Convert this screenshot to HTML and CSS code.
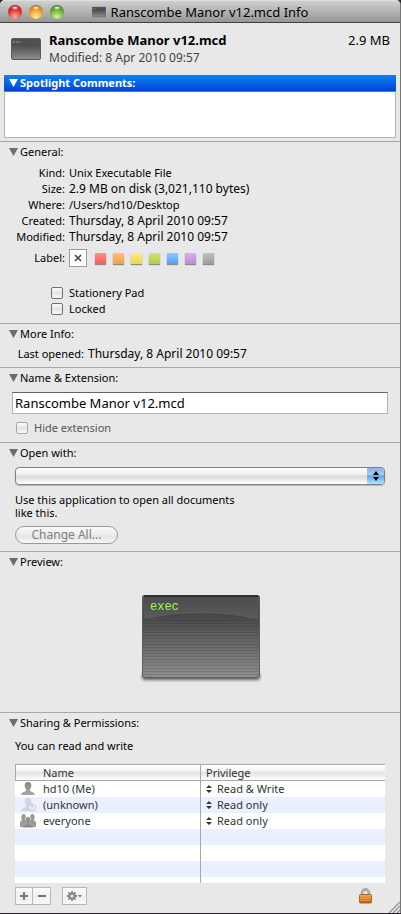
FILE: index.html
```html
<!DOCTYPE html>
<html lang="en">
<head>
    <meta charset="UTF-8">
    <meta name="viewport" content="width=device-width, initial-scale=1.0">
    <title>Ranscombe Manor v12.mcd Info</title>
    <link rel="stylesheet" href="styles.css">
</head>
<body>
    <!-- shared icons -->
    <svg class="defs" width="0" height="0" aria-hidden="true">
        <defs>
            <linearGradient id="execBody" x1="0" y1="0" x2="0" y2="1">
                <stop offset="0" stop-color="#565656"/>
                <stop offset="0.27" stop-color="#4a4a4a"/>
                <stop offset="1" stop-color="#8e8e8e"/>
            </linearGradient>
            <linearGradient id="execTop" x1="0" y1="0" x2="0" y2="1">
                <stop offset="0" stop-color="#4c4c4c"/>
                <stop offset="1" stop-color="#5c5c5c"/>
            </linearGradient>
            <pattern id="scan" width="4" height="3" patternUnits="userSpaceOnUse">
                <rect width="4" height="1" fill="#000" fill-opacity="0.1"/>
            </pattern>
            <filter id="soft" x="-10%" y="-100%" width="120%" height="300%">
                <feGaussianBlur stdDeviation="1.5"/>
            </filter>
            <linearGradient id="lockBody" x1="0" y1="0" x2="0" y2="1">
                <stop offset="0" stop-color="#f6b65c"/>
                <stop offset="0.45" stop-color="#d98225"/>
                <stop offset="1" stop-color="#b35c0c"/>
            </linearGradient>
            <linearGradient id="person" x1="0" y1="0" x2="0" y2="1">
                <stop offset="0" stop-color="#858585"/>
                <stop offset="1" stop-color="#a8a8a8"/>
            </linearGradient>
        </defs>
        <symbol id="triangle" viewBox="0 0 9 8"><path d="M0 0h9L4.5 8z" fill="currentColor"/></symbol>
        <symbol id="updown" viewBox="0 0 6 10"><path d="M3 0l3 4H0zM0 6h6l-3 4z" fill="currentColor"/></symbol>
        <symbol id="exec-small" viewBox="0 0 30 22">
            <rect x="0.5" y="0.5" width="29" height="21" rx="1.5" fill="url(#execBody)" stroke="#5a5a5a"/>
            <path d="M1 7Q15 5 29 7V1H1z" fill="#505050"/>
            <path d="M2 4h2M5 4h2M8 4h1" stroke="#7fc95c" stroke-width="1.2"/>
        </symbol>
    </svg>

    <main class="window">
        <header class="titlebar">
            <div class="lights">
                <button class="light light-red" aria-label="Close"></button>
                <button class="light light-amber" aria-label="Minimise"></button>
                <button class="light light-green" aria-label="Zoom"></button>
            </div>
            <div class="titlebar-text">
                <svg width="14" height="12" aria-hidden="true"><use href="#exec-small"/></svg>
                <span>Ranscombe Manor v12.mcd Info</span>
            </div>
        </header>

        <div class="summary">
            <svg class="summary-icon" width="30" height="22" aria-hidden="true"><use href="#exec-small"/></svg>
            <div class="summary-text">
                <h1>Ranscombe Manor v12.mcd</h1>
                <p>Modified: 8 Apr 2010 09:57</p>
            </div>
            <span class="summary-size">2.9 MB</span>
        </div>

        <section class="spotlight">
            <h2><button class="disclosure"><svg width="9" height="8"><use href="#triangle"/></svg><span id="comments">Spotlight Comments:</span></button></h2>
            <textarea aria-labelledby="comments"></textarea>
        </section>

        <section class="panel panel-general">
            <h2><button class="disclosure"><svg width="9" height="8"><use href="#triangle"/></svg>General:</button></h2>
            <dl class="facts">
                <dt>Kind:</dt><dd>Unix Executable File</dd>
                <dt>Size:</dt><dd class="numeric">2.9 MB on disk (3,021,110 bytes)</dd>
                <dt>Where:</dt><dd>/Users/hd10/Desktop</dd>
                <dt>Created:</dt><dd class="numeric">Thursday, 8 April 2010 09:57</dd>
                <dt>Modified:</dt><dd class="numeric">Thursday, 8 April 2010 09:57</dd>
            </dl>
            <div class="labels">
                <span class="labels-name">Label:</span>
                <button class="label-none" aria-label="None">
                    <svg width="8" height="8" viewBox="0 0 8 8"><path d="M1 1l6 6M7 1L1 7" stroke="#444" stroke-width="1.6"/></svg>
                </button>
                <div class="swatches">
                    <button class="swatch red" aria-label="Red"></button>
                    <button class="swatch orange" aria-label="Orange"></button>
                    <button class="swatch yellow" aria-label="Yellow"></button>
                    <button class="swatch green" aria-label="Green"></button>
                    <button class="swatch blue" aria-label="Blue"></button>
                    <button class="swatch purple" aria-label="Purple"></button>
                    <button class="swatch grey" aria-label="Grey"></button>
                </div>
            </div>
            <div class="checks">
                <label class="check"><input type="checkbox"> Stationery Pad</label>
                <label class="check"><input type="checkbox"> Locked</label>
            </div>
        </section>

        <section class="panel panel-more">
            <h2><button class="disclosure"><svg width="9" height="8"><use href="#triangle"/></svg>More Info:</button></h2>
            <dl class="facts facts-more">
                <dt>Last opened:</dt><dd class="numeric">Thursday, 8 April 2010 09:57</dd>
            </dl>
        </section>

        <section class="panel panel-name">
            <h2><button class="disclosure"><svg width="9" height="8"><use href="#triangle"/></svg><span id="name-ext">Name &amp; Extension:</span></button></h2>
            <input class="filename" type="text" value="Ranscombe Manor v12.mcd" aria-labelledby="name-ext">
            <label class="check check-disabled"><input type="checkbox" disabled> Hide extension</label>
        </section>

        <section class="panel panel-open">
            <h2><button class="disclosure"><svg width="9" height="8"><use href="#triangle"/></svg><span id="open-with">Open with:</span></button></h2>
            <div class="popup">
                <select aria-labelledby="open-with"><option></option></select>
                <span class="popup-cap"><svg width="6" height="10"><use href="#updown"/></svg></span>
            </div>
            <p class="hint">Use this application to open all documents like this.</p>
            <button class="change-all" disabled>Change All...</button>
        </section>

        <section class="panel panel-preview">
            <h2><button class="disclosure"><svg width="9" height="8"><use href="#triangle"/></svg>Preview:</button></h2>
            <svg class="preview" width="124" height="92" viewBox="-1 0 124 92" role="img" aria-label="Unix executable">
                <rect x="3" y="80" width="118" height="7" rx="3" fill="#000" fill-opacity="0.6" filter="url(#soft)"/>
                <rect x="3" y="2" width="118" height="83" rx="3" fill="url(#execBody)"/>
                <rect x="4" y="26" width="116" height="57" fill="url(#scan)"/>
                <path d="M5 26Q62 16 119 26V4H5z" fill="url(#execTop)"/>
                <path d="M20 24Q62 18 104 24" fill="none" stroke="#424242"/>
                <rect x="3.5" y="2.5" width="117" height="82" rx="3" fill="none" stroke="#5c5c5c"/>
                <path d="M5 3h114" stroke="#303030" stroke-width="2"/>
                <text x="11" y="17" class="preview-text">exec</text>
            </svg>
        </section>

        <section class="panel panel-sharing">
            <h2><button class="disclosure"><svg width="9" height="8"><use href="#triangle"/></svg>Sharing &amp; Permissions:</button></h2>
            <p class="access">You can read and write</p>
            <table class="permissions">
                <thead>
                    <tr><th scope="col">Name</th><th scope="col">Privilege</th></tr>
                </thead>
                <tbody>
                    <tr>
                        <td><div class="cell">
                            <svg width="16" height="14" viewBox="0 0 16 14"><path d="M8 0c2.400 0 3.500 1.500 3.300 3.600C11.200 5.500 10.500 7 9.900 7.600V9c1 .8 4.900 1 5.100 4H1c.2-3 4.100-3.200 5.100-4V7.600C5.500 7 4.800 5.500 4.700 3.600 4.500 1.500 5.600 0 8 0z" fill="url(#person)"/></svg>
                            hd10 (Me)</div></td>
                        <td><div class="cell"><svg width="6" height="8" viewBox="0 0 6 8"><path d="M3 0l3 3H0zM0 5h6L3 8z" fill="currentColor"/></svg><select aria-label="Privilege for hd10"><option>Read &amp; Write</option></select></div></td>
                    </tr>
                    <tr>
                        <td><div class="cell">
                            <svg width="16" height="14" viewBox="0 0 16 14"><path d="M8 0c2.400 0 3.500 1.500 3.300 3.600C11.200 5.500 10.500 7 9.900 7.600V9c1 .8 4.900 1 5.100 4H1c.2-3 4.100-3.200 5.100-4V7.600C5.500 7 4.800 5.500 4.700 3.600 4.500 1.500 5.600 0 8 0z" fill="#cfd7e4"/><circle cx="12" cy="9.500" r="3.500" fill="#f4f6fa" stroke="#c0c4cc"/><path d="M11 8.500q1-1.500 2 0l-1 1.200v1.500" fill="none" stroke="#b0b4bc"/></svg>
                            (unknown)</div></td>
                        <td><div class="cell"><svg width="6" height="8" viewBox="0 0 6 8"><path d="M3 0l3 3H0zM0 5h6L3 8z" fill="currentColor"/></svg><select aria-label="Privilege for unknown"><option>Read only</option></select></div></td>
                    </tr>
                    <tr>
                        <td><div class="cell">
                            <svg width="16" height="14" viewBox="0 0 16 14"><path d="M3.500 0C5 0 6 1 5.800 3L5 5.500 8 8v5H0V8l2-1.500C1 4.500 1 0 3.500 0zM12.500 0C11 0 10 1 10.200 3l.8 2.500L8 8v5h8V8l-2-1.500C15 4.500 15 0 12.500 0z" fill="#9a9a9a"/><path d="M8 3c1.600 0 2.400 1 2.400 2.500S9.500 8 9.200 8.500v1c1 .7 3.800 1.200 4 4H2.800c.2-2.800 3-3.300 4-4v-1C6.500 8 5.600 7 5.600 5.500S6.400 3 8 3z" fill="#8c8c8c" stroke="#c4c4c4" stroke-width="0.5"/></svg>
                            everyone</div></td>
                        <td><div class="cell"><svg width="6" height="8" viewBox="0 0 6 8"><path d="M3 0l3 3H0zM0 5h6L3 8z" fill="currentColor"/></svg><select aria-label="Privilege for everyone"><option>Read only</option></select></div></td>
                    </tr>
                    <tr><td></td><td></td></tr>
                    <tr><td></td><td></td></tr>
                    <tr><td></td><td></td></tr>
                    <tr class="row-cut"><td></td><td></td></tr>
                </tbody>
            </table>
            <footer class="actions">
                <div class="add-remove">
                    <button class="square" aria-label="Add"><svg width="8" height="8" viewBox="0 0 8 8"><path d="M4 0v8M0 4h8" stroke="#777" stroke-width="2"/></svg></button>
                    <button class="square" aria-label="Remove"><svg width="8" height="8" viewBox="0 0 8 8"><path d="M0 4h8" stroke="#777" stroke-width="2"/></svg></button>
                </div>
                <button class="square square-wide" aria-label="Actions">
                    <svg width="16" height="10" viewBox="0 0 16 10"><circle cx="5" cy="5" r="2.6" fill="none" stroke="#858585" stroke-width="2"/><path d="M5 0v2M5 8v2M0 5h2M8 5h2M1.500 1.500l1.300 1.300M7.200 7.200l1.300 1.300M8.500 1.500L7.200 2.800M2.800 7.200L1.500 8.500" stroke="#858585" stroke-width="1.8"/><path d="M11 4h4l-2 2.500z" fill="#777"/></svg>
                </button>
                <button class="lock" aria-label="Unlock">
                    <svg width="13" height="16" viewBox="0 0 13 16"><path d="M3 8V5a3.500 3.500 0 0 1 7 0v3" fill="none" stroke="#8d8d8d" stroke-width="2.4"/><path d="M3 8V5a3.500 3.500 0 0 1 7 0v3" fill="none" stroke="#d0d0d0" stroke-width="0.8"/><rect x="0.5" y="6.5" width="12" height="8.5" rx="1" fill="url(#lockBody)" stroke="#a8641d"/><path d="M1 10.500h11M1 12.500h11" stroke="#f3aa4d" stroke-width="0.6"/></svg>
                </button>
            </footer>
            <svg class="grip" width="12" height="12" viewBox="0 0 12 12" aria-hidden="true"><path d="M1 12L12 1M5 12l7-7M9 12l3-3" stroke="#8a8a8a" stroke-width="1.2"/></svg>
        </section>
    </main>
</body>
</html>
```

FILE: styles.css
```css
* {
    box-sizing: border-box;
}

body {
    margin: 0;
    background: #2a2430;
    font-family: "Lucida Grande", "Noto Sans", sans-serif;
    font-size: 11px;
    line-height: 16px;
    color: #000;
}

h1, h2, p, dl, dd {
    margin: 0;
    font-size: 11px;
    font-weight: normal;
}

button, input, select, textarea {
    margin: 0;
    padding: 0;
    border: 0;
    border-radius: 0;
    background: none;
    font: inherit;
    color: inherit;
}

svg {
    display: block;
    flex: none;
}

.defs {
    position: absolute;
}

.window {
    margin-bottom: 1px;
    background: #e8e8e8;
    border-right: 1px solid #777;
    border-radius: 5px 5px 0 0;
    overflow: hidden;
}

/* Title bar */
.titlebar {
    display: grid;
    grid-template-columns: 1fr auto 1fr;
    align-items: center;
    height: 23px;
    padding: 0 8px;
    background: linear-gradient(#cfcfcf, #969696);
    border-top: 1px solid #e0e0e0;
    border-bottom: 1px solid #404040;
}

.lights {
    display: flex;
    gap: 7px;
}

.light {
    width: 14px;
    height: 14px;
    border-radius: 50%;
}

.light-red {
    background: radial-gradient(ellipse 4px 2px at 50% 20%, #fff, transparent), radial-gradient(circle at 50% 85%, #ffb0a8, #e0302c 55%, #7c1414);
}

.light-amber {
    background: radial-gradient(ellipse 4px 2px at 50% 20%, #fff, transparent), radial-gradient(circle at 50% 85%, #fff08a, #ee9a35 55%, #8a4a12);
}

.light-green {
    background: radial-gradient(ellipse 4px 2px at 50% 20%, #fff, transparent), radial-gradient(circle at 50% 85%, #d8f59a, #66ad38 55%, #285c14);
}

.titlebar-text {
    display: flex;
    align-items: center;
    gap: 5px;
    font-size: 13px;
}

/* File summary */
.summary {
    display: flex;
    height: 52px;
    padding: 8px 10px 0 11px;
}

.summary-icon {
    margin-top: 7px;
}

.summary-text {
    flex: 1;
    padding-left: 8px;
}

.summary-text h1 {
    font-size: 13px;
    line-height: 18px;
    font-weight: bold;
}

.summary-text p {
    font-size: 12px;
    line-height: 18px;
    color: #444;
}

.summary-size {
    font-size: 13px;
    line-height: 18px;
}

/* Spotlight comments */
.spotlight {
    margin: 0 4px 3px;
}

.spotlight h2 {
    padding-left: 5px;
    background: linear-gradient(#0b85f0, #0042dc);
    color: #fff;
}

.spotlight .disclosure {
    height: 16px;
    font-weight: bold;
    color: #fff;
}

.spotlight .disclosure svg {
    color: #fff;
}

.spotlight textarea {
    display: block;
    width: 100%;
    height: 47px;
    background: #fff;
    border: 1px solid #b5b5b5;
    border-top-color: #777;
    resize: none;
}

/* Panels */
.panel {
    border-top: 1px solid #a8a8a8;
}

.panel h2 {
    padding-left: 9px;
}

.disclosure {
    display: flex;
    align-items: center;
    gap: 2px;
    height: 20px;
}

.disclosure svg {
    color: #6d6d6d;
}

.facts {
    display: grid;
    grid-template-columns: 65px 1fr;
    column-gap: 4px;
}

.facts dt {
    text-align: right;
}

.facts .numeric {
    font-size: 12px;
}

.facts-more {
    grid-template-columns: 84px 1fr;
}

.panel-general {
    padding-bottom: 6px;
}

.panel-general .facts {
    padding-top: 3px;
}

.labels {
    display: flex;
    align-items: center;
    gap: 4px;
    margin-top: 4px;
    height: 18px;
}

.labels-name {
    width: 65px;
    text-align: right;
}

.label-none {
    display: flex;
    align-items: center;
    justify-content: center;
    width: 18px;
    height: 18px;
    background: #fff;
    border: 1px solid #9a9a9a;
}

.swatches {
    display: flex;
    gap: 7px;
    padding-left: 4px;
}

.swatch {
    width: 11px;
    height: 11px;
    box-shadow: 0 1px 1px rgba(0, 0, 0, 0.4);
}

.red { background: linear-gradient(#ff9188, #fa5c54); }
.orange { background: linear-gradient(#fbc07a, #f4a040); }
.yellow { background: linear-gradient(#f8ec86, #eed848); }
.green { background: linear-gradient(#cde47c, #aed040); }
.blue { background: linear-gradient(#94c6ff, #549cfa); }
.purple { background: linear-gradient(#dab0e8, #bf88d8); }
.grey { background: linear-gradient(#c0c0c0, #9c9c9c); }

.checks {
    padding: 18px 0 0 51px;
}

.check {
    display: flex;
    align-items: center;
    gap: 6px;
}

.check input {
    appearance: none;
    width: 12px;
    height: 12px;
    background: linear-gradient(#fff, #e2e2e2 50%, #fbfbfb);
    border: 1px solid #707070;
    border-radius: 2px;
}

.check-disabled {
    color: #555;
}

.check-disabled input {
    border-color: #a5a5a5;
}

.panel-more {
    padding-bottom: 5px;
}

.facts-more {
    padding-top: 2px;
}

.panel-name {
    padding-bottom: 6px;
}

.filename {
    display: block;
    width: calc(100% - 24px);
    height: 22px;
    margin: 4px 12px 6px;
    padding: 0 2px;
    background: #fff;
    border: 1px solid #b0b0b0;
    border-top: 1px solid #666;
    font-size: 13px;
}

.panel-name .check {
    padding-left: 16px;
}

.panel-open {
    padding-bottom: 7px;
}

.popup {
    display: flex;
    height: 18px;
    margin: 4px 15px 8px;
    background: linear-gradient(#fff, #ececec 45%, #d8d8d8 50%, #fff);
    border: 1px solid #808080;
    border-radius: 4px;
    box-shadow: 0 1px 1px rgba(0, 0, 0, 0.2);
    overflow: hidden;
}

.popup select {
    flex: 1;
    appearance: none;
}

.popup-cap {
    display: flex;
    align-items: center;
    justify-content: center;
    width: 17px;
    background: linear-gradient(#8cb4e8, #a4c8f0 40%, #62a4ea 50%, #b4e4ff);
    box-shadow: 1px 0 0 #2c50a0;
    pointer-events: none;
}

.hint {
    width: 235px;
    margin-left: 15px;
    line-height: 13px;
}

.change-all {
    display: block;
    width: 103px;
    height: 18px;
    margin: 7px 0 0 15px;
    background: linear-gradient(#fafafa, #ececec 50%, #e4e4e4 55%, #f6f6f6);
    border: 1px solid #9a9a9a;
    border-radius: 9px;
    font-size: 12px;
    line-height: 14px;
    color: #808080;
}

.preview {
    margin: 21px auto 27px;
}

.preview-text {
    font-family: "Liberation Mono", monospace;
    font-size: 12px;
    fill: #9cf85c;
}

/* Sharing */
.panel-sharing {
    position: relative;
}

.access {
    padding: 5px 0 10px 15px;
}

.permissions {
    width: calc(100% - 30px);
    margin: 0 15px;
    table-layout: fixed;
    border-collapse: separate;
    border-spacing: 0;
    background: #fff;
    color: #333;
}

.permissions th,
.permissions td {
    height: 16px;
    padding: 0 0 0 5px;
    line-height: 14px;
}

.permissions th {
    height: 17px;
    background: linear-gradient(#fff, #f4f4f4 40%, #e2e2e2 50%, #fff);
    border-top: 1px solid #a8a8a8;
    border-bottom: 1px solid #a8a8a8;
    font-weight: normal;
    text-align: left;
}

.permissions th:first-child {
    width: 186px;
    padding-left: 27px;
    border-left: 1px solid #a8a8a8;
}

.permissions th:first-child,
.permissions td:first-child {
    border-right: 1px solid #a8a8a8;
}

.permissions tbody tr:nth-child(even) {
    background: #e9f0ff;
}

.permissions .row-cut td {
    height: 6px;
}

.cell {
    display: flex;
    align-items: center;
    gap: 5px;
    height: 16px;
}

td:first-child .cell {
    gap: 7px;
}

.cell select {
    appearance: none;
    height: 16px;
}

.actions {
    display: flex;
    align-items: center;
    padding: 4px 28px 8px 15px;
}

.add-remove {
    display: flex;
    margin-right: 11px;
}

.square {
    display: flex;
    align-items: center;
    justify-content: center;
    width: 18px;
    height: 18px;
    background: linear-gradient(#fbfbfb, #f0f0f0 50%, #f8f8f8);
    border: 1px solid #b8b8b8;
}

.square + .square {
    border-left: 0;
}

.square-wide {
    width: 25px;
}

.lock {
    margin-left: auto;
}

.grip {
    position: absolute;
    right: 0;
    bottom: 0;
}
```
